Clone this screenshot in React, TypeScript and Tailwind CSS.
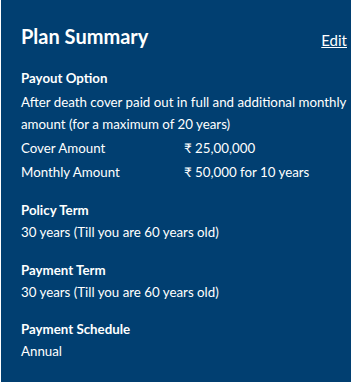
import React from "react";

const rows = [
  { label: "Cover Amount", value: "₹ 25,00,000" },
  { label: "Monthly Amount", value: "₹ 50,000 for 10 years" },
];

export default function App() {
  return (
    <div className="w-[352px] h-[384px] bg-white">
      <div
        className="ml-[1px] w-[350px] h-[382px] bg-[#013f71] text-white pl-[20px] pr-[3px] pt-[22px]"
        style={{ fontFamily: "Lato, 'Noto Sans', sans-serif" }}
      >
        <div className="flex items-end justify-between">
          <h1 className="text-[20px] leading-[28px] font-bold">Plan Summary</h1>
          <a className="text-[15px] leading-[20px] underline mr-[1px] mb-[0px]">Edit</a>
        </div>

        <div className="mt-[17px] text-[13.3px]">
          <div className="leading-[22px] font-bold mb-[2px]">Payout Option</div>
          <div className="leading-[22px]">
            After death cover paid out in full and additional monthly amount (for a maximum of 20 years)
          </div>
          <div className="mt-[1px]">
            {rows.map((r) => (
              <div key={r.label} className="flex leading-[24px]">
                <span className="w-[163px]">{r.label}</span>
                <span>{r.value}</span>
              </div>
            ))}
          </div>
        </div>

        <div className="mt-[15px] text-[13.3px]">
          <div className="leading-[22px] font-bold">Policy Term</div>
          <div className="leading-[22px]">30 years (Till you are 60 years old)</div>
        </div>

        <div className="mt-[16px] text-[13.3px]">
          <div className="leading-[22px] font-bold">Payment Term</div>
          <div className="leading-[22px]">30 years (Till you are 60 years old)</div>
        </div>

        <div className="mt-[15px] text-[13.3px]">
          <div className="leading-[22px] font-bold">Payment Schedule</div>
          <div className="leading-[22px]">Annual</div>
        </div>
      </div>
    </div>
  );
}
